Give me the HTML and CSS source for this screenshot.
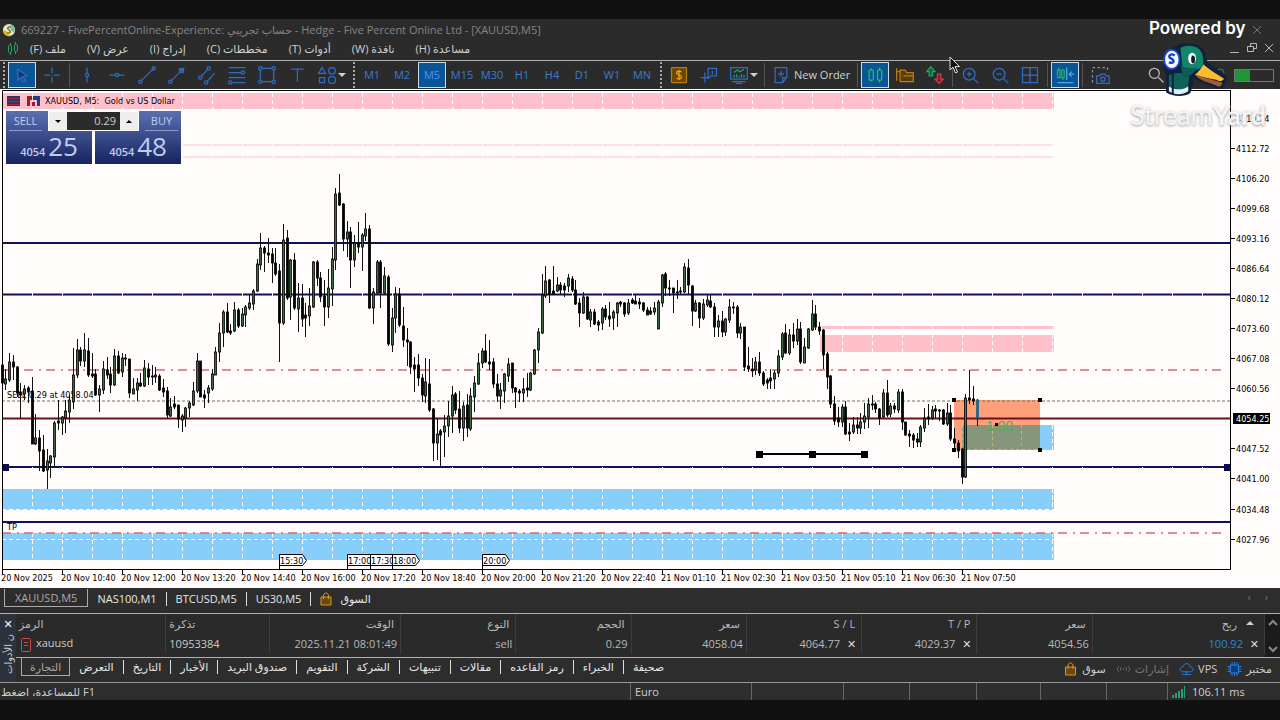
FILE: index.html
```html
<!DOCTYPE html>
<html lang="ar">

<head>

    <meta charset="utf-8">
    <meta name="viewport" content="width=device-width, initial-scale=1">

    <title>669227 - FivePercentOnline-Experience</title>

    <link rel="stylesheet" href="styles.css">

</head>

<body>

    <header class="titlebar">
        <svg class="app_logo" viewBox="0 0 16 16">
            <circle cx="8" cy="8" r="7" fill="#e8e4c8" />
            <path d="M1 8a7 7 0 0 0 8 7l-3-5z" fill="#e0b020" />
            <path d="M9 1a7 7 0 0 1 5 10l-4-3z" fill="#7fb9a0" />
            <path d="M10 5C7 3.500 5 6 8 8s1 4-2 3" fill="none" stroke="#7a6410" stroke-width="1.500" />
        </svg>
        <h1>669227 - FivePercentOnline-Experience: حساب تجريبي - Hedge - Five Percent Online Ltd - [XAUUSD,M5]</h1>
        <span class="spacer"></span>
        <svg class="close" viewBox="0 0 10 10" fill="none" stroke="#777"><path d="M1 1l8 8M9 1l-8 8" /></svg>
    </header>

    <nav class="menu">
        <svg class="menu_icon" viewBox="0 0 12 14" fill="none" stroke="#22b060">
            <path d="M3.500 1v2M3.500 11v2M8.500 0v2M8.500 10v2" />
            <rect x="1.500" y="3.500" width="3" height="7" rx="1" />
            <rect x="7.500" y="2.500" width="3" height="7" rx="1" />
        </svg>
        <button dir="rtl">ملف (F)</button>
        <button dir="rtl">عرض (V)</button>
        <button dir="rtl">إدراج (I)</button>
        <button dir="rtl">مخططات (C)</button>
        <button dir="rtl">أدوات (T)</button>
        <button dir="rtl">نافذة (W)</button>
        <button dir="rtl">مساعدة (H)</button>
        <span class="spacer"></span>
        <svg class="window_icons" viewBox="0 0 50 14" fill="none" stroke="#b8b8b8">
            <path d="M4 10.500h9M39 2l8 8M47 2l-8 8" />
            <path d="M24.500 4.500v-3h6v5h-3M21.500 4.500h6v5h-6z" />
        </svg>
    </nav>

    <div class="toolbar">
        <span class="grip"></span>
        <button class="tool active" aria-label="Cursor"><svg viewBox="0 0 24 24"><path d="M7 5l11 8-5 1 3 5-3 1-2-5-4 3z" fill="#123a63" /></svg></button>
        <button class="tool" aria-label="Crosshair"><svg viewBox="0 0 24 24"><path d="M12 3v7M12 14v7M3 12h7M14 12h7M12 12h.5" /></svg></button>
        <span class="sep"></span>
        <button class="tool" aria-label="Vertical line"><svg viewBox="0 0 24 24"><path d="M12 3v7M12 14v7" /><circle cx="12" cy="12" r="2" /></svg></button>
        <button class="tool" aria-label="Horizontal line"><svg viewBox="0 0 24 24"><path d="M3 12h7M14 12h7" /><circle cx="12" cy="12" r="2" /></svg></button>
        <button class="tool" aria-label="Trend line"><svg viewBox="0 0 24 24"><path d="M5 19L20 4" /><circle cx="4" cy="20" r="2" /><circle cx="20" cy="4" r="2" /></svg></button>
        <button class="tool" aria-label="Arrow line"><svg viewBox="0 0 24 24"><path d="M5 19L20 4M14 5l6-1-1 6" /><circle cx="4" cy="20" r="2" /><circle cx="17" cy="7" r="2" /></svg></button>
        <button class="tool" aria-label="Channel"><svg viewBox="0 0 24 24"><path d="M5 14l8-9M12 20l9-10" /><circle cx="4" cy="15" r="2" /><circle cx="14" cy="4" r="2" /><circle cx="11" cy="21" r="2" /></svg></button>
        <button class="tool" aria-label="Fibonacci"><svg viewBox="0 0 24 24"><path d="M2 3h20M2 9h15M2 15h20M7 21h15" /><circle cx="19" cy="9" r="2" /><circle cx="4" cy="21" r="2" /></svg></button>
        <button class="tool" aria-label="Rectangle"><svg viewBox="0 0 24 24"><path d="M6 4h12M6 20h12M4 6v12M20 6v12" /><circle cx="4" cy="4" r="2" /><circle cx="20" cy="4" r="2" /><circle cx="4" cy="20" r="2" /><circle cx="20" cy="20" r="2" /></svg></button>
        <button class="tool" aria-label="Text"><svg viewBox="0 0 24 24"><path d="M5 5h15M12.500 5v15" /></svg></button>
        <button class="tool" aria-label="Shapes"><svg viewBox="0 0 24 24"><path d="M6 3l4 7H2zM3 15h6v6H3z" /><circle cx="18" cy="7" r="4" /><path d="M16 14h4l2 2v4l-2 2h-4l-2-2v-4z" /></svg></button>
        <span class="caret"></span>
        <span class="grip"></span>
        <button class="tool">M1</button>
        <button class="tool">M2</button>
        <button class="tool active">M5</button>
        <button class="tool">M15</button>
        <button class="tool">M30</button>
        <button class="tool">H1</button>
        <button class="tool">H4</button>
        <button class="tool">D1</button>
        <button class="tool">W1</button>
        <button class="tool">MN</button>
        <span class="grip"></span>
        <button class="tool gold" aria-label="Trade levels"><svg viewBox="0 0 24 24"><rect x="3" y="3" width="18" height="18" rx="1" fill="#6b4708" /><path d="M15 8.500c-2-2-6-1.500-6 1s6 2 6 5-4 3-6 1M12 6v12" stroke="#f0a818" /></svg></button>
        <button class="tool" aria-label="Data tip"><svg viewBox="0 0 24 24"><path d="M7 9v12M2 15h11M11 4h10v9h-6l-4 3zM16 7v4" /></svg></button>
        <button class="tool" aria-label="Indicators"><svg viewBox="0 0 24 24"><path d="M2 3h20v14H2zM4 20h16M8 22h8" /><path d="M6 9l4-3 3 2 5-3M6 15v-3M9 15v-4M12 15v-2M15 15v-4M18 15v-3" stroke="#22a070" /></svg></button>
        <span class="caret"></span>
        <span class="sep"></span>
        <button class="new_order"><svg viewBox="0 0 24 24"><path d="M5 3h14v12l-5 6H5zM19 15h-5v6M12 7v7M8.500 10.500h7" /></svg>New Order</button>
        <span class="sep"></span>
        <button class="tool active green" aria-label="Candlesticks"><svg viewBox="0 0 24 24"><rect x="5" y="6" width="5" height="12" rx="1" /><rect x="15" y="6" width="5" height="12" rx="1" /><path d="M7.500 4v2M7.500 18v2M17.500 3v3M17.500 18v3" /></svg></button>
        <button class="tool gold" aria-label="Templates"><svg viewBox="0 0 24 24"><path d="M2 4v15M2 8h4" /><path d="M6 20V6h6l2 3h8v11zM10 13h12" fill="#5a3c08" /></svg></button>
        <button class="tool" aria-label="Trade arrows"><svg viewBox="0 0 24 24"><path d="M5 13V8H2l5-6 5 6H9v5z" stroke="#1fa864" fill="#14603c" /><path d="M15 11h4v6h3l-5 5-5-5h3z" stroke="#d83a4a" fill="#702028" /></svg></button>
        <span class="sep"></span>
        <button class="tool" aria-label="Zoom in"><svg viewBox="0 0 24 24"><circle cx="11" cy="11" r="7" /><path d="M16 16l6 6M11 8v6M8 11h6" /></svg></button>
        <button class="tool" aria-label="Zoom out"><svg viewBox="0 0 24 24"><circle cx="11" cy="11" r="7" /><path d="M16 16l6 6M8 11h6" /></svg></button>
        <button class="tool" aria-label="Tile windows"><svg viewBox="0 0 24 24"><path d="M3 3h18v18H3zM12 3v18M3 12h18" /></svg></button>
        <span class="sep"></span>
        <button class="tool active" aria-label="Chart shift"><svg viewBox="0 0 24 24"><path d="M3 6h3v9H3zM8 6h3v9H8zM4.500 3v3M9.500 15v3" stroke="#25b060" /><path d="M14 3v15M23 11h-6M20 8l-3 3 3 3M3 21h19" stroke="#4fa8e8" /></svg></button>
        <span class="sep"></span>
        <button class="tool" aria-label="Screenshot"><svg viewBox="0 0 24 24"><path d="M3 21V3h18v6" stroke="#8a929c" stroke-dasharray="3 3" /><path d="M8 13h4l1-2h5l1 2h4v9H8z" /><circle cx="15.500" cy="17" r="2.500" /></svg></button>
        <span class="spacer"></span>
        <button class="tool light" aria-label="Search"><svg viewBox="0 0 24 24"><circle cx="10" cy="10" r="6" /><path d="M15 15l6 6" /></svg></button>
        <svg class="online" viewBox="0 0 12 14" fill="none" stroke="#1f9450"><circle cx="6" cy="5" r="4" /><path d="M6 3v10" /></svg>
        <span class="battery"><span style="width: 40%"></span></span>
    </div>

    <main class="chart">
        <svg class="plot" id="plot" viewBox="0 89 1280 499">
            <g id="zones">
                <rect x="2" y="93" width="1052" height="16" class="pink" />
                <rect x="183" y="144" width="871" height="2" class="pink faint" />
                <rect x="183" y="156" width="871" height="2" class="pink faint" />
                <rect x="822" y="326" width="232" height="3" class="pink" />
                <rect x="820" y="335" width="234" height="17" class="pink" />
                <rect x="2" y="489" width="1052" height="21" class="blue" />
                <rect x="2" y="533" width="1052" height="27" class="blue" />
                <rect x="962" y="425" width="92" height="25" class="blue" />
            </g>
            <g class="level">
                <path d="M2 243H1231M2 294.500H1231M2 467H1231M2 522H1231" />
            </g>
            <g id="grid" class="grid"></g>
            <rect x="954" y="400" width="86" height="50" fill="#ffa07a" />
            <rect x="962" y="425" width="78" height="25" fill="#87967b" />
            <path d="M992.500 425v25M1021.500 425v25M962 449.500h78M962.500 425v25" stroke="#c3b97a" stroke-dasharray="3 3" />
            <path d="M2 418.500H1231" stroke="#6a1018" stroke-width="2" />
            <path d="M2 370H1226M2 533H1226" class="stops" />
            <path d="M2 401H1231" stroke="#5d7f55" stroke-dasharray="3 2" />
            <text x="7" y="398">SELL 0.29 at 4058.04</text>
            <text x="7" y="530">TP</text>
            <text x="45" y="104">XAUUSD, M5:&#160; Gold vs US Dollar</text>
            <g id="candles"></g>
            <text x="986" y="431" class="ratio">1.00</text>
            <path d="M759 454H865" stroke="#000" stroke-width="2" />
            <path d="M756 451h7v7h-7zM809 451h7v7h-7zM861 451h7v7h-7zM952 398h4v4h-4zM1038 398h4v4h-4zM952 448h4v4h-4zM1038 448h4v4h-4zM995 423h3v3h-3z" />
            <path d="M2 464h7v7H2zM1224 464h7v7h-7z" fill="#0a0a50" />
            <path d="M2.500 569.500V90.500H1231M1230.500 90V569.500H2" class="frame" />
            <g id="axis"></g>
            <g id="tags"></g>
            <g id="header_icons">
                <rect x="7" y="96" width="13" height="10" fill="#2c3468" />
                <path d="M7 98.500h13M7 101.500h13M7 104.500h13" stroke="#a02a38" />
                <path d="M27 96h5v4h-2v6h-3zM32 102h3v4h-3z" fill="#a01c28" />
                <path d="M33 96h7v10h-3v-6h-4z" fill="#223c88" />
            </g>
        </svg>

        <div class="one_click">
            <div class="volume">
                <button aria-label="Decrease volume"><span class="caret dark"></span></button>
                <input type="text" value="0.29" aria-label="Volume">
                <button aria-label="Increase volume"><span class="caret dark up"></span></button>
            </div>
            <button class="deal sell"><span class="side">SELL</span><span class="price">4054 <b>25</b></span></button>
            <button class="deal buy"><span class="side">BUY</span><span class="price">4054 <b>48</b></span></button>
        </div>
    </main>

    <nav class="chart_tabs">
        <button class="selected">XAUUSD,M5</button>
        <button>NAS100,M1</button>
        <button>BTCUSD,M5</button>
        <button>US30,M5</button>
        <button class="market"><svg viewBox="0 0 12 14"><path d="M1 5h10v8H1z" fill="#6b4708" stroke="#d89a20" /><path d="M3.500 7V4c0-4 5-4 5 0v3" fill="none" stroke="#d89a20" /></svg>السوق</button>
        <span class="spacer"></span>
        <span class="arrows">‹</span>
        <span class="arrows">›</span>
    </nav>

    <section class="toolbox">
        <div class="strip">
            <button aria-label="Close">✕</button>
            <span>ن الأدوات</span>
        </div>
        <div class="toolbox_main">
            <div class="trade">
                <table>
                    <colgroup>
                        <col class="c_symbol"><col class="c_ticket"><col class="c_time"><col><col><col><col><col><col><col class="c_profit">
                    </colgroup>
                    <thead>
                        <tr>
                            <th class="left">الرمز</th>
                            <th class="left">تذكرة</th>
                            <th>الوقت</th>
                            <th>النوع</th>
                            <th>الحجم</th>
                            <th>سعر</th>
                            <th>S / L</th>
                            <th>T / P</th>
                            <th>سعر</th>
                            <th>ربح <span class="caret up sort"></span></th>
                        </tr>
                    </thead>
                    <tbody>
                        <tr>
                            <td class="left"><svg class="order_icon" viewBox="0 0 10 14" fill="none" stroke="#d04a50"><rect x="0.500" y="0.500" width="9" height="13" rx="1" /><path d="M3 4.500h4M3 7.500h4" /></svg>xauusd</td>
                            <td class="left">10953384</td>
                            <td>2025.11.21 08:01:49</td>
                            <td>sell</td>
                            <td>0.29</td>
                            <td>4058.04</td>
                            <td>4064.77 <button aria-label="Remove S/L">✕</button></td>
                            <td>4029.37 <button aria-label="Remove T/P">✕</button></td>
                            <td>4054.56</td>
                            <td><span class="profit">100.92</span> <button aria-label="Close position">✕</button></td>
                        </tr>
                    </tbody>
                </table>
                <svg class="scroll" viewBox="0 0 15 43" fill="none" stroke="#888" stroke-width="2"><path d="M4 11l4-4 4 4M4 33l4 4 4-4" /></svg>
            </div>
            <nav class="toolbox_tabs">
                <button class="selected">التجارة</button>
                <button>التعرض</button>
                <button>التاريخ</button>
                <button>الأخبار</button>
                <button>صندوق البريد</button>
                <button>التقويم</button>
                <button>الشركة</button>
                <button>تنبيهات</button>
                <button>مقالات</button>
                <button>رمز القاعده</button>
                <button>الخبراء</button>
                <button>صحيفة</button>
                <span class="spacer"></span>
                <div class="services">
                    <a href="#"><svg viewBox="0 0 14 14"><path d="M2 5h10v8H2z" fill="#6b4708" stroke="#d89a20" /><path d="M4.500 7V4c0-4 5-4 5 0v3" fill="none" stroke="#d89a20" /></svg>سوق</a>
                    <a href="#" class="dim"><svg viewBox="0 0 16 14" fill="none" stroke="#6a6a6a"><path d="M3 4c-2 2-2 4 0 6M13 4c2 2 2 4 0 6M5.500 5c-1 1-1 3 0 4M10.500 5c1 1 1 3 0 4M8 6v2" /></svg>إشارات</a>
                    <a href="#"><svg viewBox="0 0 16 14" fill="none" stroke="#2a7de0"><path d="M4 10c-4 0-4-5 0-5 1-5 8-5 8 0 4 0 4 5 0 5zM8 10v3M3 13h10" /></svg>VPS</a>
                    <a href="#"><svg viewBox="0 0 14 14" stroke="#2a7de0"><rect x="3" y="3" width="8" height="8" fill="#0d3e78" /><path d="M4.500 0v3M7 0v3M9.500 0v3M4.500 11v3M7 11v3M9.500 11v3M0 4.500h3M0 7h3M0 9.500h3M11 4.500h3M11 7h3M11 9.500h3" /></svg>مختبر</a>
                </div>
            </nav>
        </div>
    </section>

    <footer class="status">
        <span>للمساعدة، اضغط F1</span>
        <span>Euro</span>
        <span></span>
        <span></span>
        <span></span>
        <span></span>
        <span></span>
        <span></span>
        <span><svg viewBox="0 0 14 12" fill="#22a070"><path d="M0 9h2v3H0zM3 7h2v5H3zM6 5h2v7H6zM9 3h2v9H9zM12 0h1v12h-1z" /></svg>106.11 ms</span>
    </footer>

    <!-- stream watermark -->
    <div class="watermark">
        <p class="powered">Powered by</p>
        <svg viewBox="0 0 66 60">
            <path d="M3 52V34C-2 26 0 12 10 6 20-2 40 0 44 12c1 4 1 8 3 10l19 13c1 4-2 4-2 7 1 5-4 8-9 6l-15-6c-4-2-7-4-9-4 0 6-1 10-3 15-6 4-18 4-25-1z" fill="#12203c" />
            <path d="M6 50V34c8-3 18-3 21 2-1 6-1 10-1 14-6 3-14 3-20 0z" fill="#0e6259" />
            <path d="M6 46c6 4 14 4 20 0v5c-6 4-14 4-20 0z" fill="#e6edf2" />
            <path d="M18 6c10-5 22-1 23 9 1 5 1 8-1 11-5 4-12 4-20 1z" fill="#12866a" />
            <path d="M18 24c8 4 14 3 17 2-1 5-6 9-14 11z" fill="#0b5c58" />
            <path d="M33 34c6 2 20 6 28 8 0 4-3 5-6 3-8-3-17-5-22-11z" fill="#a85a35" />
            <path d="M42 23c2 3 10 8 21 15-2 3-5 3-8 1-8-1-15-3-22-5 4-3 6-7 9-11z" fill="#fbbc2e" />
            <ellipse cx="30" cy="17" rx="4" ry="6" fill="#fff" />
            <ellipse cx="31" cy="18" rx="2" ry="4" fill="#10182c" />
            <path d="M10 28v26" stroke="#12203c" stroke-width="2" />
            <ellipse cx="9" cy="18" rx="8" ry="10" fill="#f4f8ff" stroke="#1747c8" stroke-width="2" />
            <path d="M12 14c-4-3-8 1-4 3s4 6-2 4" fill="none" stroke="#1747c8" stroke-width="2.500" />
        </svg>
        <p class="brand">Stream<b>Yard</b></p>
    </div>
    <svg class="pointer" viewBox="0 0 12 18"><path d="M1 1v13l3-3 2.500 6 2-1L6 10.500h4.500z" fill="#111" stroke="#ddd" /></svg>

    <script src="chart.js"></script>

</body>

</html>
```

FILE: styles.css
```css
* {
    box-sizing: border-box;
}

body {
    margin: 0;
    padding: 19px 0;
    min-height: 100vh;
    background-color: #111;
    color: #d0d0d0;
    font-family: "Open Sans", "DejaVu Sans", sans-serif;
    font-size: 11px;
    line-height: 16px;
    position: relative;
    overflow-x: hidden;
}

button,
input {
    font: inherit;
    color: inherit;
    background: none;
    border: 0;
    border-radius: 0;
    padding: 0;
}

p {
    margin: 0;
}

.spacer {
    flex: 1;
}

/* title + menu */

.titlebar {
    display: flex;
    align-items: center;
    gap: 5px;
    height: 22px;
    padding: 0 18px 0 2px;
    background-color: #2b2b2b;
}

.titlebar h1 {
    margin: 0;
    font-size: 11px;
    font-weight: normal;
    color: #858585;
}

.app_logo {
    width: 14px;
    height: 14px;
}

.close {
    width: 10px;
    height: 10px;
}

.menu {
    display: flex;
    align-items: center;
    gap: 21px;
    height: 19px;
    padding: 0 4px 3px 7px;
    background-color: #2b2b2b;
}

.menu_icon {
    width: 12px;
    height: 14px;
    margin-right: -10px;
}

.window_icons {
    width: 50px;
    height: 14px;
}

/* toolbar */

.toolbar {
    display: flex;
    align-items: center;
    height: 29px;
    padding: 0 6px 0 0;
    border-top: 1px solid #b0b0b0;
    background-color: #2b2b2b;
}

.tool {
    flex: none;
    display: flex;
    align-items: center;
    justify-content: center;
    width: 28px;
    height: 26px;
    margin: 0 1px;
    border: 1px solid transparent;
    color: #3b7bd6;
}

.tool svg,
.new_order svg {
    width: 20px;
    height: 20px;
    fill: none;
    stroke: #2f6cc8;
    stroke-width: 1.5;
}

.tool.active {
    background-color: #0a5596;
    border-color: #c8dcec;
    color: #4c94ec;
}

.tool.gold svg {
    stroke: #b87c14;
}

.tool.green svg {
    stroke: #25c060;
}

.tool.light svg {
    stroke: #bbb;
}

.tool.light {
    margin-right: 44px;
}

.online {
    flex: none;
    width: 12px;
    height: 14px;
    margin-right: 8px;
}

.grip {
    flex: none;
    width: 2px;
    height: 26px;
    margin: 0 2px 0 3px;
    border-left: 2px dotted #aaa;
}

.sep {
    flex: none;
    width: 1px;
    height: 24px;
    margin: 0 2px;
    background-color: #555;
}

.caret {
    flex: none;
    display: inline-block;
    border: 4px solid transparent;
    border-top-color: #d0d0d0;
    border-bottom-width: 0;
}

.toolbar .caret {
    margin: 0 4px 0 -4px;
}

.caret.up {
    transform: rotate(180deg);
}

.caret.dark {
    border-width: 3px 3px 0;
    border-top-color: #000;
}

.new_order {
    flex: none;
    display: flex;
    align-items: center;
    gap: 3px;
    width: 88px;
    padding-left: 4px;
}

.battery {
    flex: none;
    width: 40px;
    height: 13px;
    border: 1px solid #777;
}

.battery span {
    display: block;
    height: 100%;
    background-color: #1f9438;
}

/* chart */

.chart {
    position: relative;
    background-color: #fffcfb;
}

.plot {
    display: block;
    width: 100%;
    height: auto;
    font-family: "DejaVu Sans Condensed", "DejaVu Sans", sans-serif;
    font-size: 9px;
}

.pink {
    fill: #ffc0cb;
}

.faint {
    opacity: 0.5;
}

.blue {
    fill: #87cefa;
}

.level {
    fill: none;
    stroke: #10105c;
    stroke-width: 2;
}

.grid {
    fill: none;
    stroke: #fffcfb;
    stroke-dasharray: 4 3;
}

.stops {
    fill: none;
    stroke: #d9686c;
    stroke-width: 1.5;
    stroke-dasharray: 9 6 2 5;
}

.frame {
    fill: none;
    stroke: #000;
}

.candle_wick {
    fill: none;
    stroke: #111;
}

.ratio {
    font-family: "Liberation Sans", sans-serif;
    font-size: 14px;
    fill: #5aa858;
}

.price_now {
    fill: #fff;
}

.one_click {
    position: absolute;
    left: 6px;
    top: 22px;
    display: grid;
    grid-template-columns: 86px 86px;
    gap: 3px;
    padding-bottom: 1px;
}

.volume {
    position: absolute;
    left: 42px;
    top: 0;
    display: flex;
    width: 91px;
    height: 20px;
    padding: 1px;
    background-color: #fff;
}

.volume button {
    width: 18px;
    display: flex;
    align-items: center;
    justify-content: center;
    background-color: #eee;
}

.volume input {
    flex: 1;
    min-width: 0;
    padding-right: 4px;
    text-align: right;
    color: #ccc;
    background-color: #2b2b2b;
}

.deal {
    display: flex;
    flex-direction: column;
    justify-content: space-between;
    height: 53px;
    color: #c2cdec;
    background-image: linear-gradient(#5b6fb0, #16245f);
}

.side {
    width: 33px;
    margin: 1px 3px 0;
    border-bottom: 1px solid #8c9bcc;
    text-align: center;
    line-height: 18px;
}

.buy .side {
    align-self: flex-end;
}

.price {
    align-self: center;
    font-weight: 600;
    line-height: 30px;
}

.price b {
    font-size: 26px;
    font-weight: normal;
}

/* chart tabs */

.chart_tabs {
    display: flex;
    align-items: flex-start;
    height: 25px;
    padding: 1px 12px 0 4px;
    background-color: #2d2d2d;
    color: #e8e8e8;
}

.chart_tabs button {
    height: 14px;
    margin-top: 3px;
    padding: 0 9px;
    line-height: 14px;
    border-right: 1px solid #ddd;
}

.chart_tabs .selected {
    height: 18px;
    margin-top: 0;
    padding: 0 10px;
    border: 1px solid #aaa;
    border-top: 0;
    color: #aaa;
    line-height: 16px;
}

.chart_tabs .market {
    display: flex;
    gap: 8px;
    border-right: 0;
}

.market svg {
    width: 12px;
    height: 14px;
}

.arrows {
    margin-left: 14px;
    color: #777;
}

/* toolbox */

.toolbox {
    display: flex;
    height: 69px;
    border-top: 1px solid #b0b0b0;
    background-color: #2a2a2a;
}

.strip {
    flex: none;
    display: flex;
    flex-direction: column;
    align-items: center;
    width: 16px;
    background-color: #2c333e;
    overflow: hidden;
}

.strip button {
    height: 20px;
    color: #fff;
}

.strip span {
    writing-mode: vertical-rl;
    transform: rotate(180deg);
    white-space: nowrap;
    font-size: 10px;
    line-height: 14px;
}

.toolbox_main {
    flex: 1;
    min-width: 0;
}

.trade {
    display: flex;
    align-items: flex-start;
    height: 43px;
}

.trade table {
    flex: 1;
    width: 100%;
    table-layout: fixed;
    border-collapse: collapse;
    line-height: 14px;
}

.c_symbol {
    width: 12%;
}

.c_ticket {
    width: 8.3%;
}

.c_time {
    width: 10.5%;
}

.c_profit {
    width: 13.8%;
}

.trade th,
.trade td {
    height: 20px;
    padding: 0 3px;
    border-right: 1px solid #3c3c3c;
    font-weight: normal;
    text-align: right;
    white-space: nowrap;
    color: #b8b8b8;
}

.trade th {
    padding-right: 6px;
}

.trade .left {
    text-align: left;
}

.trade td.left {
    color: #ccc;
}

.trade td button {
    margin: 0 2px 0 4px;
    color: #ddd;
    font-weight: bold;
}

.trade .profit {
    color: #2b86d8;
}

.trade .sort {
    margin: 0 4px 3px 6px;
}

.order_icon {
    width: 10px;
    height: 14px;
    margin: 0 5px 0 2px;
    vertical-align: middle;
}

.scroll {
    flex: none;
    width: 15px;
    height: 43px;
    background-color: #1b1b1b;
}

.toolbox_tabs {
    display: flex;
    align-items: flex-start;
    height: 25px;
    padding-left: 5px;
    border-top: 1px solid #b0b0b0;
    background-color: #2d2d2d;
    color: #e8e8e8;
}

.toolbox_tabs button {
    height: 14px;
    margin-top: 2px;
    padding: 0 9px;
    line-height: 12px;
    border-right: 1px solid #ddd;
    white-space: nowrap;
}

.toolbox_tabs .selected {
    height: 18px;
    margin-top: 0;
    padding: 0 8px;
    border: 1px solid #aaa;
    border-top: 0;
    color: #aaa;
    line-height: 16px;
}

.toolbox_tabs button:nth-last-of-type(1) {
    border-right: 0;
}

.services {
    display: flex;
    align-items: center;
    gap: 10px;
    height: 22px;
    padding-right: 8px;
}

.services a {
    display: flex;
    align-items: center;
    gap: 4px;
    color: #ccc;
    text-decoration: none;
}

.services .dim {
    color: #777;
}

.services svg {
    width: 15px;
    height: 14px;
}

/* status bar */

.status {
    display: grid;
    grid-template-columns: 630fr 121fr 92fr 66fr 67fr 64fr 66fr 61fr 113fr;
    height: 18px;
    border-top: 1px solid #999;
    background-color: #2d2d2d;
}

.status span {
    display: flex;
    align-items: center;
    gap: 6px;
    padding: 0 4px;
    border-left: 1px solid #666;
}

.status span:first-child {
    padding-left: 1px;
    border-left: 0;
}

.status svg {
    width: 14px;
    height: 12px;
}

/* overlays */

.watermark {
    position: absolute;
    top: 15px;
    right: 14px;
    width: 140px;
    color: #fff;
    pointer-events: none;
}

.watermark svg {
    display: block;
    width: 66px;
    height: 58px;
    margin: 1px 0 0 36px;
}

.powered {
    padding-left: 23px;
    font-family: Inter, sans-serif;
    font-size: 17px;
    font-weight: 600;
    line-height: 26px;
    white-space: nowrap;
}

.brand {
    font-family: Lato, sans-serif;
    font-size: 27px;
    line-height: 30px;
    text-align: right;
    color: #f4f4f4;
    text-shadow: 0 1px 3px #999;
}

.pointer {
    position: absolute;
    left: 949px;
    top: 56px;
    width: 12px;
    height: 18px;
    pointer-events: none;
}
```

FILE: chart.js
```js
// [high, body top, body bottom, low, index into bodyColors]
const candles = [
    [364,365,383,384,0],[369,379,384,390,1],[353,362,380,382,1],[355,362,367,380,0],[366,367,393,397,0],[383,392,395,418,0],[385,389,394,400,1],[386,388,392,403,0],
    [377,391,444,444,0],[414,438,444,445,1],[430,438,451,471,0],[435,450,471,472,0],[449,461,470,489,1],[455,456,463,478,1],[421,423,457,467,1],[400,421,423,430,0],
    [416,417,423,435,1],[400,411,418,433,1],[395,400,412,423,1],[348,375,402,409,1],[339,350,375,378,1],[347,350,361,366,0],[333,350,361,367,1],[338,351,375,377,0],
    [353,374,376,378,0],[369,374,395,396,0],[385,389,395,412,1],[361,369,390,394,1],[357,370,375,379,0],[367,374,385,393,0],[349,356,385,386,1],[351,356,373,374,0],
    [353,358,372,377,1],[354,358,359,366,0],[359,359,393,398,0],[378,389,394,394,1],[378,383,390,401,1],[373,383,386,387,0],[360,368,386,387,1],[363,369,377,385,0],
    [365,376,377,385,3],[367,375,377,383,3],[374,376,390,391,0],[379,388,392,397,0],[387,391,415,418,0],[398,407,416,417,1],[396,404,407,409,0],[405,405,419,428,0],
    [414,416,420,432,1],[407,408,418,427,1],[401,403,408,417,1],[382,391,405,406,1],[353,361,391,393,1],[361,361,397,397,0],[390,395,398,408,0],[385,388,393,403,1],
    [369,374,389,391,1],[347,352,375,375,1],[323,333,352,362,1],[310,312,333,347,1],[303,312,332,333,0],[324,331,333,335,0],[302,310,331,332,1],[308,310,326,328,0],
    [308,314,326,327,1],[305,307,315,327,1],[295,303,308,310,1],[289,291,304,310,1],[259,264,291,292,1],[233,248,265,270,1],[246,248,253,272,0],[238,253,255,263,0],
    [248,254,263,283,0],[248,263,274,276,0],[264,271,323,362,0],[224,240,323,325,1],[230,238,298,300,0],[259,260,297,320,1],[253,260,308,310,0],[283,298,309,332,1],
    [284,298,319,327,0],[303,315,318,337,0],[288,306,316,326,1],[261,262,307,308,1],[260,262,278,286,0],[272,278,297,302,0],[280,296,307,326,0],[269,288,307,318,1],
    [247,259,289,306,1],[188,194,260,270,1],[174,193,205,206,0],[203,204,239,251,0],[221,232,239,257,1],[227,232,260,288,0],[235,243,260,267,1],[222,243,247,253,0],
    [233,235,247,271,1],[213,229,236,241,1],[225,229,308,309,0],[288,292,308,324,1],[260,262,293,294,1],[260,262,293,308,0],[267,276,293,295,1],[275,277,344,346,0],
    [308,318,345,352,1],[287,294,318,333,1],[288,294,325,327,0],[307,326,340,347,0],[328,340,342,366,0],[341,342,367,374,0],[357,365,369,392,0],[354,365,378,386,0],
    [374,378,395,402,0],[358,382,396,403,1],[359,384,410,412,0],[408,409,443,461,0],[418,434,443,460,1],[429,431,435,466,0],[415,426,432,457,1],[401,416,426,437,1],
    [386,395,416,433,1],[392,394,410,414,0],[391,409,428,433,0],[402,406,428,441,1],[394,405,428,437,0],[388,396,429,431,1],[376,383,397,412,1],[353,363,384,385,1],
    [348,351,363,368,1],[334,351,362,363,0],[340,362,364,370,0],[358,362,384,388,0],[374,384,396,402,0],[383,390,396,409,1],[373,374,391,403,1],[358,364,376,382,1],
    [363,363,388,393,0],[387,388,392,408,0],[389,391,393,402,0],[378,389,393,402,1],[373,388,390,397,0],[372,373,390,391,1],[349,350,374,375,1],[328,332,350,363,1],
    [274,295,333,334,1],[266,281,296,298,1],[279,280,294,303,0],[266,291,294,295,0],[277,285,291,292,1],[282,285,290,294,0],[283,286,290,297,0],[274,278,286,292,1],
    [276,279,290,292,0],[280,290,304,305,0],[298,303,313,327,0],[292,297,313,314,1],[296,297,319,320,0],[309,312,320,327,1],[309,312,324,325,0],[320,322,325,331,0],
    [307,309,323,330,1],[305,309,317,320,0],[302,316,319,327,0],[310,312,318,330,1],[302,303,313,327,1],[301,302,304,307,0],[302,303,314,317,0],[299,303,313,315,1],
    [298,300,303,304,0],[295,301,304,304,0],[298,302,304,309,0],[302,303,310,312,0],[307,310,315,315,0],[307,311,314,315,0],[302,308,312,315,1],[300,302,329,329,1],
    [274,275,303,307,1],[272,274,288,296,0],[280,288,289,296,3],[288,288,293,313,0],[280,292,293,299,3],[287,291,292,295,0],[263,267,292,293,1],[259,268,285,294,0],
    [285,286,311,326,0],[300,303,311,312,1],[302,303,318,328,0],[299,304,318,320,1],[295,300,305,307,1],[295,301,307,308,0],[303,307,327,337,0],[315,321,327,337,1],
    [311,321,332,337,0],[318,319,332,336,1],[299,307,320,323,1],[302,307,308,314,0],[305,307,333,338,0],[323,327,333,339,1],[327,327,367,371,0],[347,366,369,372,0],
    [358,369,371,377,0],[357,362,370,375,1],[352,362,373,376,0],[371,373,384,386,0],[378,380,383,389,0],[369,378,381,389,0],[370,373,379,389,1],[350,356,373,377,1],
    [332,334,357,360,1],[324,333,353,354,0],[329,335,353,355,1],[323,335,341,348,0],[319,329,341,345,1],[322,329,362,364,0],[338,347,363,363,1],[328,329,348,349,1],
    [300,314,330,331,1],[305,314,327,330,0],[322,327,331,335,0],[329,330,355,369,0],[352,354,377,389,0],[375,376,404,408,0],[396,404,421,425,0],[407,418,422,427,0],
    [404,407,422,427,1],[401,407,434,435,0],[423,432,434,441,0],[417,425,432,434,1],[417,425,428,434,0],[413,422,428,434,1],[403,416,422,429,1],[398,404,417,428,1],
    [395,404,405,410,0],[402,404,409,413,0],[408,409,418,425,0],[389,393,417,418,1],[380,393,415,417,0],[403,406,414,417,1],[403,406,409,413,0],[389,392,410,413,1],
    [389,392,422,430,0],[422,422,435,436,0],[430,434,436,447,0],[433,435,440,448,0],[433,439,442,447,0],[425,427,442,447,1],[408,418,428,432,1],[404,417,419,425,0],
    [406,410,418,420,1],[405,409,411,418,0],[409,410,411,421,3],[409,410,424,425,0],[403,413,424,426,1],[405,413,439,441,0],[428,439,443,448,0],[440,443,451,458,0],
    [448,449,477,484,0],[394,398,477,478,4],[370,398,400,404,0],[386,399,401,405,0],[399,400,418,426,2]
];

const bodyColors = ["#000", "#3c6a42", "#1d6486", "#5c3a66", "#2f7d72"];

const times = ["20 Nov 2025", "20 Nov 10:40", "20 Nov 12:00", "20 Nov 13:20", "20 Nov 14:40", "20 Nov 16:00",
    "20 Nov 17:20", "20 Nov 18:40", "20 Nov 20:00", "20 Nov 21:20", "20 Nov 22:40", "21 Nov 01:10",
    "21 Nov 02:30", "21 Nov 03:50", "21 Nov 05:10", "21 Nov 06:30", "21 Nov 07:50"];

const prices = ["4119.24", "4112.72", "4106.20", "4099.68", "4093.16", "4086.64", "4080.12", "4073.60",
    "4067.08", "4060.56", "", "4047.52", "4041.00", "4034.48", "4027.96"];

// candles, 3.75 units apart
let out = "";
candles.forEach(([high, top, bottom, low, kind], i) => {
    const x = Math.round(1.7 + i * 3.75) + 0.5;
    const color = kind === 2 ? bodyColors[2] : "#000";
    out += `<path class="candle_wick" d="M${x} ${high}V${low}" />`;
    out += `<rect x="${x - 1}" y="${top}" width="2" height="${Math.max(bottom - top, 1)}" fill="${bodyColors[kind]}" stroke="${color}" stroke-width="0.8" />`;
});
document.getElementById("candles").innerHTML = out;

// grid, only visible over the coloured zones and levels
out = "";
for (let x = 32.5; x < 1231; x += 30) {
    out += `<path d="M${x} 93V158M${x} 292V520M${x} 533V569" />`;
}
out += '<path d="M2 509.500H1054M2 539.500H1054M1052.500 93V109M1052.500 335V352M1052.500 425V450M1052.500 489V510M1052.500 533V560" />';
document.getElementById("grid").innerHTML = out;

// price and time scales
out = "";
prices.forEach((price, i) => {
    const y = Math.round(119 + i * 30.04);
    if (price) {
        out += `<path class="frame" d="M1231 ${y - 0.5}h4" /><text x="1236" y="${y + 3}">${price}</text>`;
    }
});
out += '<rect x="1233" y="413" width="37" height="11" /><text x="1236" y="422" class="price_now">4054.25</text>';
times.forEach((time, i) => {
    const x = 2 + i * 60;
    out += `<path class="frame" d="M${x + 0.5} 569v5" /><text x="${x - 1}" y="581">${time}</text>`;
});
document.getElementById("axis").innerHTML = out;

// session tags above the time scale
out = "";
[[279, "15:30"], [347, "17:00"], [370, "17:30"], [392, "18:00"], [482, "20:00"]].forEach(([x, label]) => {
    out += `<path d="M${x + 0.5} 569V554.500h23l4 6-4 5h-23" fill="#fff" stroke="#000" /><text x="${x + 1}" y="564">${label}</text>`;
});
document.getElementById("tags").innerHTML = out;
```
